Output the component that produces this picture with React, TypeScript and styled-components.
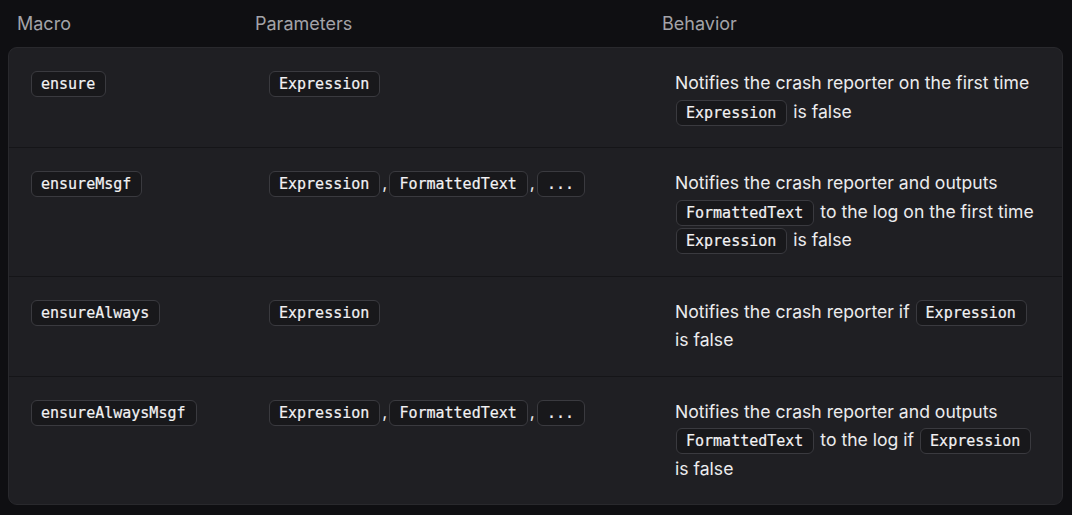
import * as React from 'react'
import styled, { createGlobalStyle } from 'styled-components'

const GlobalStyle = createGlobalStyle`
    html, body {
        margin: 0;
        padding: 0;
        background: #0f0f12;
    }
    body {
        font-family: Inter, "Noto Sans", sans-serif;
        color: #ececee;
    }
`

const Page = styled.div`
    width: 1072px;
    height: 515px;
    padding: 0 9px 0 8px;
    box-sizing: border-box;
    background: #0f0f12;
`

const Columns = `
    display: grid;
    grid-template-columns: 238px 407px 1fr;
`

const Header = styled.div`
    ${Columns}
    height: 47px;
    align-items: center;
    font-size: 18px;
    color: #a3a3a8;
`

const HeadCell = styled.div`
    padding-left: 9px;
`

const Card = styled.div`
    background: #1f1f23;
    border: 1px solid #29292d;
    border-radius: 9px;
    overflow: hidden;
`

const Row = styled.div`
    ${Columns}
    padding: 21px 0;
    border-top: 1px solid #151518;
    &:first-child {
        border-top: none;
    }
`

const Cell = styled.div`
    padding-left: 21px;
    font-size: 17.6px;
    line-height: 28.5px;
    padding-right: 16px;
`

const Code = styled.code`
    display: inline-block;
    font-family: "DejaVu Sans Mono", "Liberation Mono", monospace;
    font-size: 15px;
    line-height: 24px;
    padding: 0 10px 0 9px;
    background: #18181b;
    border: 1px solid #3a3a3f;
    border-radius: 6px;
    color: #f2f2f4;
    vertical-align: middle;
    margin: -2px 1px;
    -webkit-text-stroke: 0.2px #f2f2f4;
`

const Comma = styled.span`
    margin: 0 1px;
`

type Macro = {
    name: string
    params: string[]
    behavior: React.ReactNode
}

const macros: Macro[] = [
    {
        name: 'ensure',
        params: ['Expression'],
        behavior: (
            <>
                Notifies the crash reporter on the first time <Code>Expression</Code> is false
            </>
        ),
    },
    {
        name: 'ensureMsgf',
        params: ['Expression', 'FormattedText', '...'],
        behavior: (
            <>
                Notifies the crash reporter and outputs <Code>FormattedText</Code> to the log on the first time{' '}
                <Code>Expression</Code> is false
            </>
        ),
    },
    {
        name: 'ensureAlways',
        params: ['Expression'],
        behavior: (
            <>
                Notifies the crash reporter if <Code>Expression</Code> is false
            </>
        ),
    },
    {
        name: 'ensureAlwaysMsgf',
        params: ['Expression', 'FormattedText', '...'],
        behavior: (
            <>
                Notifies the crash reporter and outputs <Code>FormattedText</Code> to the log if{' '}
                <Code>Expression</Code> is false
            </>
        ),
    },
]

export default function App() {
    return (
        <Page>
            <GlobalStyle />
            <Header>
                <HeadCell>Macro</HeadCell>
                <HeadCell>Parameters</HeadCell>
                <HeadCell>Behavior</HeadCell>
            </Header>
            <Card>
                {macros.map(m => (
                    <Row key={m.name}>
                        <Cell>
                            <Code>{m.name}</Code>
                        </Cell>
                        <Cell>
                            {m.params.map((p, i) => (
                                <React.Fragment key={p}>
                                    {i > 0 && <Comma>,</Comma>}
                                    <Code>{p}</Code>
                                </React.Fragment>
                            ))}
                        </Cell>
                        <Cell>{m.behavior}</Cell>
                    </Row>
                ))}
            </Card>
        </Page>
    )
}
